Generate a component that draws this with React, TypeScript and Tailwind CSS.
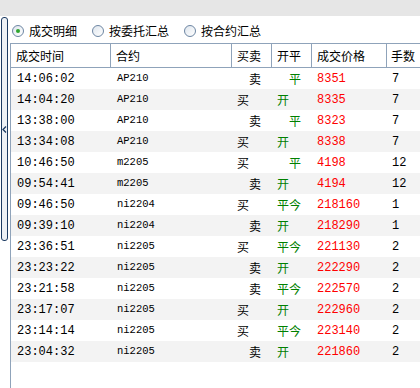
import React from 'react';

type Row = {
    time: string;
    code: string;
    side: '买' | '卖';
    oc: '开' | '平' | '平今';
    price: string;
    qty: string;
};

const rows: Row[] = [
    { time: '14:06:02', code: 'AP210', side: '卖', oc: '平', price: '8351', qty: '7' },
    { time: '14:04:20', code: 'AP210', side: '买', oc: '开', price: '8335', qty: '7' },
    { time: '13:38:00', code: 'AP210', side: '卖', oc: '平', price: '8323', qty: '7' },
    { time: '13:34:08', code: 'AP210', side: '买', oc: '开', price: '8338', qty: '7' },
    { time: '10:46:50', code: 'm2205', side: '买', oc: '平', price: '4198', qty: '12' },
    { time: '09:54:41', code: 'm2205', side: '卖', oc: '开', price: '4194', qty: '12' },
    { time: '09:46:50', code: 'ni2204', side: '买', oc: '平今', price: '218160', qty: '1' },
    { time: '09:39:10', code: 'ni2204', side: '卖', oc: '开', price: '218290', qty: '1' },
    { time: '23:36:51', code: 'ni2205', side: '买', oc: '平今', price: '221130', qty: '2' },
    { time: '23:23:22', code: 'ni2205', side: '卖', oc: '开', price: '222290', qty: '2' },
    { time: '23:21:58', code: 'ni2205', side: '卖', oc: '平今', price: '222570', qty: '2' },
    { time: '23:17:07', code: 'ni2205', side: '买', oc: '开', price: '222960', qty: '2' },
    { time: '23:14:14', code: 'ni2205', side: '买', oc: '平今', price: '223140', qty: '2' },
    { time: '23:04:32', code: 'ni2205', side: '卖', oc: '开', price: '221860', qty: '2' },
];

const Radio = ({ checked, label }: { checked?: boolean; label: string }) => (
    <div className="flex items-center gap-[5px]">
        <div className="w-[12px] h-[12px] rounded-full border border-[#6d86a3] bg-gradient-to-br from-[#dfe6ee] to-white flex items-center justify-center">
            {checked && <div className="w-[4px] h-[4px] rounded-full bg-[#2fa52f]" />}
        </div>
        <span className="text-[12px] leading-none text-black">{label}</span>
    </div>
);

// header cell: fixed width, blue-grey divider on the right
const Th = ({ w, children }: { w: string; children: React.ReactNode }) => (
    <div className={`${w} shrink-0 h-full flex items-center pl-[5px] border-r border-[#8fa3ba]`}>{children}</div>
);

export default function App() {
    return (
        <div
            className="w-[420px] h-[388px] overflow-hidden bg-white flex flex-col"
            style={{ fontFamily: '"Noto Sans CJK SC", "Liberation Sans", sans-serif' }}
        >
            <div className="h-[16px] shrink-0 bg-[#e6e6e6]" />

            <div className="flex flex-1 min-h-0">
                {/* collapse splitter */}
                <div className="w-[10px] shrink-0 pt-[1px] pl-[1px]">
                    <div className="w-[7px] h-[224px] rounded-[3px] border border-[#1d3b62] bg-[#eef1f5] flex items-center justify-center">
                        <svg width="5" height="7" viewBox="0 0 5 7" className="-ml-[1px]">
                            <path d="M4 0.5 L1 3.5 L4 6.5" fill="none" stroke="#1d3b62" strokeWidth="1.3" />
                        </svg>
                    </div>
                </div>

                <div className="flex-1 flex flex-col min-w-0">
                    <div className="h-[27px] shrink-0 flex items-center pl-[2px] gap-[15px] pt-[2px]">
                        <Radio checked label="成交明细" />
                        <Radio label="按委托汇总" />
                        <Radio label="按合约汇总" />
                    </div>

                    <div className="flex-1 border-l border-[#8fa3ba] flex flex-col">
                        <div className="h-[25px] shrink-0 flex border-y border-[#8fa3ba] text-[12px] text-black whitespace-nowrap">
                            <Th w="w-[100px]">成交时间</Th>
                            <Th w="w-[121px]">合约</Th>
                            <Th w="w-[40px]">买卖</Th>
                            <Th w="w-[40px]">开平</Th>
                            <Th w="w-[75px]">成交价格</Th>
                            <div className="w-[60px] shrink-0 flex items-center pl-[4px]">手数</div>
                        </div>

                        {rows.map((r, i) => (
                            <div
                                key={i}
                                className={`h-[21px] shrink-0 flex items-center whitespace-nowrap ${i % 2 ? 'bg-[#f3f3f3]' : 'bg-white'}`}
                            >
                                <div className="w-[100px] shrink-0 pl-[6px] text-[12px] font-['Liberation_Mono',monospace] text-black">
                                    {r.time}
                                </div>
                                <div className="w-[121px] shrink-0 pl-[6px] text-[10.5px] font-['Liberation_Mono',monospace] text-black">
                                    {r.code}
                                </div>
                                <div className={`w-[40px] shrink-0 text-[12px] text-black ${r.side === '买' ? 'pl-[5px]' : 'pl-[17px]'}`}>
                                    {r.side}
                                </div>
                                <div className={`w-[40px] shrink-0 text-[12px] text-[#008000] ${r.oc === '平' ? 'pl-[17px]' : 'pl-[5px]'}`}>
                                    {r.oc}
                                </div>
                                <div className="w-[75px] shrink-0 pl-[5px] text-[12px] font-['Liberation_Mono',monospace] text-[#ff0000]">
                                    {r.price}
                                </div>
                                <div className="shrink-0 pl-[5px] text-[12px] font-['Liberation_Mono',monospace] text-black">
                                    {r.qty}
                                </div>
                            </div>
                        ))}
                    </div>
                </div>
            </div>
        </div>
    );
}
